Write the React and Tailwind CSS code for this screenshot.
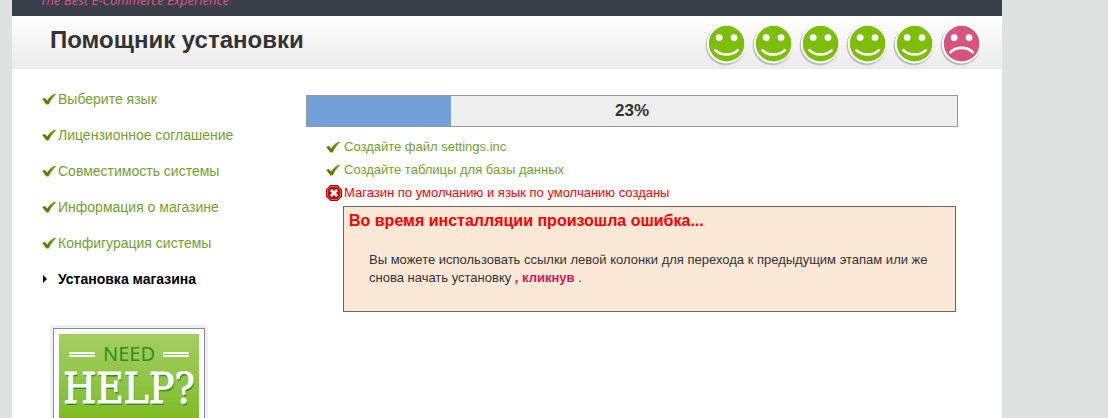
const menu = [
  'Выберите язык',
  'Лицензионное соглашение',
  'Совместимость системы',
  'Информация о магазине',
  'Конфигурация системы',
];

const moods = ['happy', 'happy', 'happy', 'happy', 'happy', 'sad'];

const tasks = [
  { text: 'Создайте файл settings.inc', ok: true },
  { text: 'Создайте таблицы для базы данных', ok: true },
  { text: 'Магазин по умолчанию и язык по умолчанию созданы', ok: false },
];

const progress = 23;

function Check() {
  return (
    <svg viewBox="0 0 16 16" className="w-4 h-4 shrink-0" aria-hidden="true">
      <path d="M0 8.2 2.6 6.8 5.2 9.2 C7.4 6.4 9.6 4.2 13 2.6 L14 3.2 C11.2 6 8.6 9.4 6.6 13.6 L4.2 13.6 C3.2 11.4 1.8 9.6 0 8.2Z" fill="#739a1c" />
      <path d="M0.8 8.4 2.6 7.6 5.4 10.4 C6.8 8.4 8.2 6.8 10 5.4 C8.4 8 7.2 10.4 6.2 13 L4.6 13 C3.6 11.2 2.4 9.8 0.8 8.4Z" fill="#567806" />
    </svg>
  );
}

function ErrorIcon() {
  return (
    <svg viewBox="0 0 16 16" className="w-4 h-4 shrink-0" aria-hidden="true">
      <path d="M4.5 0h7L16 4.5v7L11.5 16h-7L0 11.5v-7Z" fill="#a30000" />
      <path d="M5 1.4h6L14.6 5v6L11 14.6H5L1.4 11V5Z" fill="#c40a0a" stroke="#e87878" strokeWidth="0.9" />
      <path d="m5 5 6 6M11 5l-6 6" stroke="#fff" strokeWidth="2.8" />
    </svg>
  );
}

function Face({ mood }) {
  const happy = mood === 'happy';
  return (
    <svg viewBox="0 0 42 42" className="w-[42px] h-[42px]" aria-hidden="true">
      <circle cx="20.6" cy="21.4" r="20.2" fill="#000" opacity="0.1" />
      <circle cx="20.6" cy="20.9" r="19.8" fill="#000" opacity="0.15" />
      <circle cx="21.4" cy="19.9" r="19.6" fill="#fff" />
      <circle cx="21.6" cy="19.6" r="17.8" fill={happy ? '#7dbe0a' : '#d6547f'} />
      <circle cx="14.2" cy="13.6" r="3.4" fill="#fff" />
      <circle cx="29" cy="13.6" r="3.4" fill="#fff" />
      <path
        d={happy ? 'M10.4 26.2C16 32 27.2 32 32.8 26.2' : 'M10.4 28.4C16 22.4 27.2 22.4 32.8 28.4'}
        fill="none"
        stroke="#fff"
        strokeWidth="2.6"
        strokeLinecap="round"
      />
    </svg>
  );
}

function HelpBadge() {
  return (
    <a href="#help" className="flex flex-col flex-1 w-[158px] ml-[38px] border-[3px] border-b-0 border-[#eff0f1] rounded-t">
      <span className="flex flex-col flex-1 border border-b-0 border-[#868c92] p-[5px] pb-0">
        <span className="flex flex-col flex-1 items-center bg-linear-to-b from-[#a3cf62] to-[#7fbc22] pt-2">
          <span className="flex items-center gap-2 font-['Noto_Sans',sans-serif] text-[20px] leading-6 text-[#2f8f22]">
            <span className="w-[26px] h-[5px] border-y-2 border-white" />
            NEED
            <span className="w-[26px] h-[5px] border-y-2 border-white" />
          </span>
          <span className="font-['DejaVu_Serif_Condensed','DejaVu_Serif',serif] text-[42px] leading-[46px] text-white [-webkit-text-stroke:1px_white] [text-shadow:1px_2px_0_#2f8f22]">
            HELP?
          </span>
        </span>
      </span>
    </a>
  );
}

function App() {
  return (
    <div className="min-h-screen flex bg-[#e0e2e1] pl-3 font-['Liberation_Sans',Arial,sans-serif] text-[#333]">
      <div className="flex flex-col w-full max-w-[990px] bg-white">
        {/* Top bar */}
        <div className="flex items-end h-4 overflow-hidden bg-[#3a404a] pl-7 pb-2">
          <p className="font-['Noto_Sans',sans-serif] italic text-[13px] leading-4 text-[#d6547f]">The Best E-Commerce Experience</p>
        </div>

        <header className="flex items-center justify-between h-[53px] bg-linear-to-b from-white to-[#ebebeb] pl-[38px] pr-5">
          <h1 className="text-[24px] leading-8 font-bold pb-[6px]">Помощник установки</h1>
          <div className="flex gap-[5px] pt-1">
            {moods.map((m, i) => (
              <Face key={i} mood={m} />
            ))}
          </div>
        </header>

        <div className="flex flex-1">
          {/* Steps */}
          <nav className="flex flex-col w-[294px] shrink-0 pt-5">
            <ul className="flex flex-col gap-4 pl-[30px] text-[14px] leading-5">
              {menu.map((item) => (
                <li key={item} className="flex items-center">
                  <Check />
                  <a href="#step" className="text-[#73a22c]">{item}</a>
                </li>
              ))}
              <li className="flex items-center font-bold text-black">
                <svg viewBox="0 0 16 16" className="w-4 h-4" aria-hidden="true">
                  <path d="M1 4v8l4-4Z" fill="#000" />
                </svg>
                Установка магазина
              </li>
            </ul>
            <div className="flex flex-1 flex-col pt-9">
              <HelpBadge />
            </div>
          </nav>

          <main className="flex-1 pt-[26px] pr-11">
            <div className="grid h-8 border border-[#999] bg-[#eee]">
              <div className="col-start-1 row-start-1 bg-[#72a1da]" style={{ width: `${progress - 0.8}%` }} />
              <p className="col-start-1 row-start-1 text-center text-[17px] leading-[30px] font-bold">{progress}%</p>
            </div>

            <ul className="pl-5 pt-2 text-[13px] leading-[23px]">
              {tasks.map((t) => (
                <li key={t.text} className={t.ok ? 'flex items-center gap-0.5 text-[#73a22c]' : 'flex items-center gap-0.5 text-[#f00]'}>
                  {t.ok ? <Check /> : <ErrorIcon />}
                  {t.text}
                </li>
              ))}
            </ul>

            <div className="ml-[37px] mr-[2px] mt-[2px] border border-[#666] bg-[#fce8d6] px-[5px] pt-1 pb-6">
              <h2 className="text-[16px] leading-5 font-bold text-[#f00]">Во время инсталляции произошла ошибка...</h2>
              <p className="pl-5 pr-4 pt-5 text-[13px] leading-[18px]">
                Вы можете использовать ссылки левой колонки для перехода к предыдущим этапам или же снова начать установку{' '}
                <a href="#restart" className="font-bold text-[#d41958]">, кликнув</a> .
              </p>
            </div>
          </main>
        </div>
      </div>
    </div>
  );
}

export default App;
